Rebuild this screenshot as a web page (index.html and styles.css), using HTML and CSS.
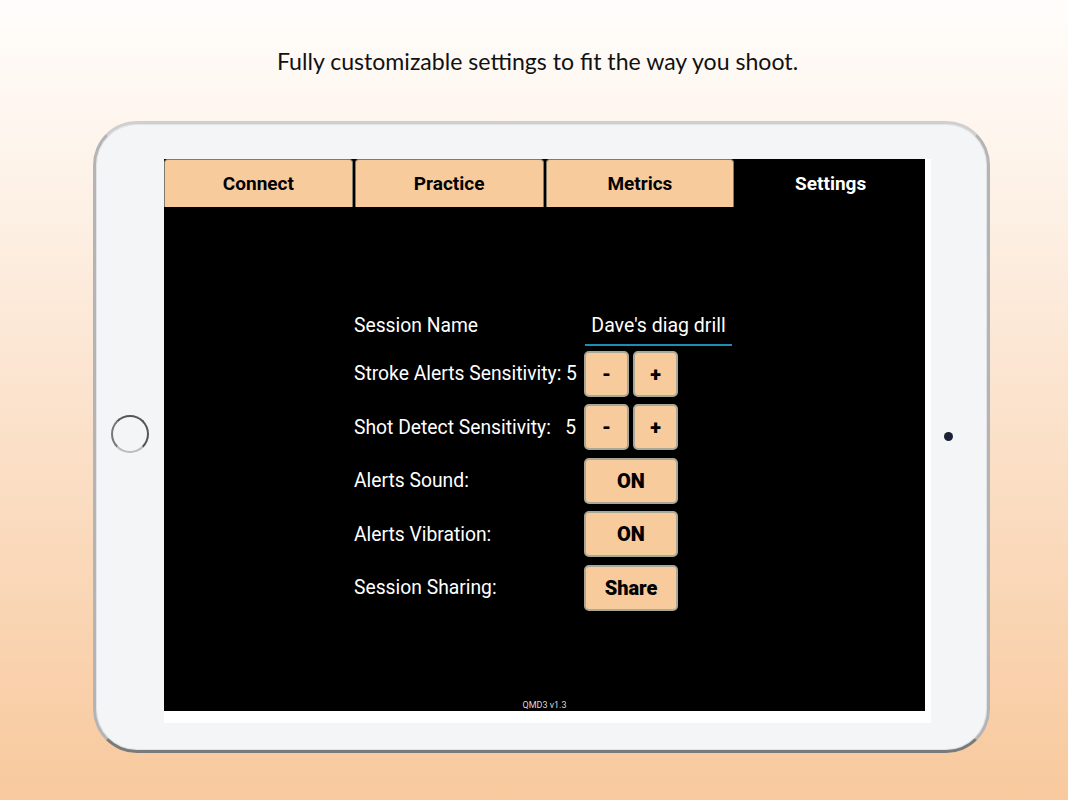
FILE: index.html
```html
<!DOCTYPE html>
<html lang="en">
<head>
  <meta charset="UTF-8">
  <meta name="viewport" content="width=device-width, initial-scale=1.0">
  <title>QMD3 Settings</title>
  <link rel="stylesheet" href="styles.css">
</head>
<body>

  <p class="caption">Fully customizable settings to fit the way you shoot.</p>

  <div class="ipad">
    <div class="side side-left">
      <div class="home-button"></div>
    </div>

    <div class="screen">
      <div class="app">
        <nav class="tabs">
          <div class="tab">Connect</div>
          <div class="tab">Practice</div>
          <div class="tab">Metrics</div>
          <div class="tab active">Settings</div>
        </nav>

        <main class="settings">
          <div class="row row-name">
            <span class="label">Session Name</span>
            <span class="name-input">Dave's diag drill</span>
          </div>

          <div class="row">
            <span class="label">Stroke Alerts Sensitivity: 5</span>
            <div class="stepper">
              <button class="btn">-</button>
              <button class="btn">+</button>
            </div>
          </div>

          <div class="row">
            <span class="label">Shot Detect Sensitivity:&nbsp;&nbsp; 5</span>
            <div class="stepper">
              <button class="btn">-</button>
              <button class="btn">+</button>
            </div>
          </div>

          <div class="row">
            <span class="label">Alerts Sound:</span>
            <button class="btn btn-wide">ON</button>
          </div>

          <div class="row">
            <span class="label">Alerts Vibration:</span>
            <button class="btn btn-wide">ON</button>
          </div>

          <div class="row">
            <span class="label">Session Sharing:</span>
            <button class="btn btn-wide">Share</button>
          </div>
        </main>

        <footer class="version">QMD3 v1.3</footer>
      </div>
    </div>

    <div class="side side-right">
      <div class="camera"></div>
    </div>
  </div>

</body>
</html>
```

FILE: styles.css
```css
body {
  margin: 0;
  padding: 0;
  height: 800px;
  overflow: hidden;
  font-family: Roboto, 'Liberation Sans', sans-serif;
  background: linear-gradient(#fffdfb 0%, #fdf1e6 25%, #fbe0c8 55%, #f8c99d 100%);
}

.caption {
  margin: 0;
  padding: 46px 0 0 7px;
  height: 30px;
  line-height: 30px;
  text-align: center;
  font-family: Lato, 'Open Sans', sans-serif;
  font-size: 23.1px;
  color: #111;
}

.ipad {
  display: flex;
  align-items: center;
  box-sizing: border-box;
  width: 897px;
  height: 632px;
  margin: 45px 0 0 93px;
  background-color: #f4f5f7;
  border: 3px solid #b4b4b4;
  border-top-color: #cfcfcf;
  border-bottom-color: #7a7a7a;
  border-radius: 44px;
  box-shadow: inset 0 0 0 1px #e2e3e6;
}

.side {
  display: flex;
  align-items: center;
  height: 100%;
}

.side-left {
  width: 68px;
  justify-content: center;
  padding-bottom: 6px;
  box-sizing: border-box;
}

.side-right {
  flex: 1;
  padding-left: 13px;
  padding-bottom: 2px;
  box-sizing: border-box;
}

.home-button {
  width: 34px;
  height: 34px;
  border-radius: 50%;
  border: 2px solid #555;
  border-bottom-color: #bbb;
  border-left-color: #777;
}

.camera {
  width: 9px;
  height: 9px;
  border-radius: 50%;
  background-color: #1c2235;
}

.screen {
  width: 767px;
  height: 564px;
  margin-top: 8px;
  background-color: #fff;
}

.app {
  display: flex;
  flex-direction: column;
  width: 761px;
  height: 552px;
  background-color: #000;
}

.tabs {
  display: flex;
  gap: 2px;
  height: 48px;
  background-color: #000;
}

.tab {
  flex: 1;
  display: flex;
  align-items: center;
  justify-content: center;
  background-color: #f8cb9c;
  border: 1px solid #7f7b6d;
  border-bottom: none;
  border-radius: 4px 4px 0 0;
  font-size: 19px;
  font-weight: bold;
  color: #000;
}

.tab.active {
  background-color: #000;
  border-color: #000;
  color: #fff;
}

.settings {
  flex: 1;
  display: flex;
  flex-direction: column;
  gap: 7.5px;
  padding: 98px 0 0 190px;
}

.row {
  display: flex;
  align-items: center;
  height: 46px;
}

.row-name {
  height: 38px;
  padding-top: 3px;
  box-sizing: border-box;
}

.label {
  width: 230px;
  font-size: 19.3px;
  color: #fff;
  white-space: pre;
}

.name-input {
  box-sizing: border-box;
  width: 147px;
  margin-left: 1px;
  margin-top: 8px;
  padding-bottom: 7px;
  border-bottom: 2px solid #1f8db3;
  text-align: center;
  font-size: 19.5px;
  color: #fff;
}

.stepper {
  display: flex;
  gap: 4px;
}

.btn {
  box-sizing: border-box;
  width: 45px;
  height: 46px;
  padding: 0;
  background-color: #f8cb9c;
  border: 2px solid #a9a796;
  border-radius: 5px;
  font-family: Roboto, 'Liberation Sans', sans-serif;
  font-size: 20px;
  font-weight: 900;
  color: #000;
  cursor: pointer;
}

.btn-wide {
  width: 94px;
}

.version {
  padding-bottom: 1px;
  text-align: center;
  font-family: 'Liberation Sans Narrow', Roboto, sans-serif;
  font-size: 9px;
  color: #d8d8d8;
}
```
